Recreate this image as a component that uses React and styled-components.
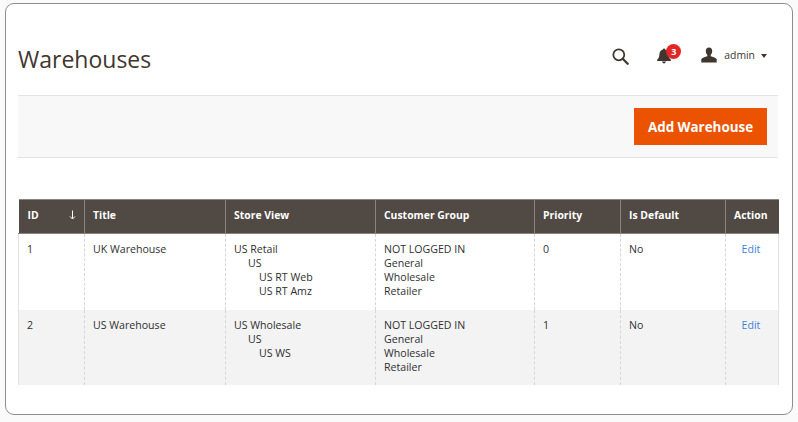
import React from "react";
import styled, { createGlobalStyle } from "styled-components";

const GlobalStyle = createGlobalStyle`
    html, body {
        margin: 0;
        padding: 0;
        background: #fff;
        font-family: "Open Sans", "Noto Sans", sans-serif;
    }
`;

const Page = styled.div`
    width: 798px;
    height: 422px;
    padding: 3px 5px 7px 5px;
    box-sizing: border-box;
    background: #fafafa;
`;

const Frame = styled.div`
    height: 412px;
    box-sizing: border-box;
    padding: 0 14px 0 12px;
    background: #fff;
    border: 1px solid #8e8e8e;
    border-radius: 9px;
`;

const Header = styled.header`
    height: 91px;
    box-sizing: border-box;
    padding-top: 38px;
    display: flex;
    justify-content: space-between;
    align-items: flex-start;
`;

const Title = styled.h1`
    margin: 0;
    font-size: 23px;
    line-height: 34px;
    font-weight: 400;
    color: #41362f;
`;

const Tools = styled.div`
    display: flex;
    align-items: center;
    height: 26px;
    padding-right: 11px;
`;

const SearchIcon = styled.svg`
    margin-top: 2px;
`;

const Bell = styled.div`
    position: relative;
    width: 16px;
    height: 18px;
    margin-top: 2px;
    margin-left: 27px;
    margin-right: 28px;
`;

const Badge = styled.span`
    position: absolute;
    left: 10px;
    top: -3px;
    width: 15px;
    height: 15px;
    border-radius: 50%;
    background: #e22626;
    color: #fff;
    font-size: 9px;
    line-height: 15px;
    font-weight: 700;
    text-align: center;
`;

const UserName = styled.span`
    margin-left: 6px;
    font-size: 10.4px;
    color: #41362f;
`;

const Caret = styled.span`
    width: 0;
    height: 0;
    margin-left: 6px;
    margin-top: 1px;
    border-left: 3.5px solid transparent;
    border-right: 3.5px solid transparent;
    border-top: 4px solid #41362f;
`;

const ActionBar = styled.div`
    height: 63px;
    box-sizing: border-box;
    display: flex;
    justify-content: flex-end;
    align-items: center;
    padding-right: 11px;
    background: #f8f8f8;
    border-top: 1px solid #e3e3e3;
    border-bottom: 1px solid #e3e3e3;
`;

const AddButton = styled.button`
    width: 133px;
    height: 37px;
    padding: 0;
    background: #eb5202;
    border: 1px solid #eb5202;
    color: #fff;
    font-family: inherit;
    font-size: 13.4px;
    font-weight: 700;
`;

const Grid = styled.table`
    width: 760px;
    margin-top: 41px;
    table-layout: fixed;
    border-collapse: collapse;
    font-size: 10.6px;
    line-height: 14px;
    color: #303030;
`;

const HeadCell = styled.th`
    height: 34px;
    box-sizing: border-box;
    padding: 0 8px 4px;
    background: #514943;
    color: #fff;
    font-size: 10.4px;
    font-weight: 700;
    text-align: left;
    border-left: 1px solid #8a837e;
    border-top: 1px solid #8a837e;
    border-bottom: 1px solid #8a837e;
    &:first-child {
        padding-left: 9px;
        border-left: none;
    }
`;

const IdHead = styled.div`
    display: flex;
    justify-content: space-between;
    align-items: center;
`;

const Row = styled.tr`
    background: ${(props) => (props.$alt ? "#f3f3f3" : "#fff")};
`;

const Cell = styled.td`
    height: ${(props) => props.$height}px;
    box-sizing: border-box;
    padding: 8px 8px 0;
    vertical-align: top;
    border-left: 1px dashed #d6d6d6;
    &:first-child {
        border-left: 1px solid #e3e3e3;
    }
    &:last-child {
        padding-right: 10px;
        border-right: 1px solid #e3e3e3;
        text-align: center;
    }
`;

const Line = styled.div`
    padding-left: ${(props) => props.$indent || 0}px;
    white-space: nowrap;
`;

const EditLink = styled.a`
    color: #3d85d8;
    text-decoration: none;
`;

const columns = [66, 141, 150, 159, 86, 105, 53];
const headings = ["ID", "Title", "Store View", "Customer Group", "Priority", "Is Default", "Action"];
const groups = ["NOT LOGGED IN", "General", "Wholesale", "Retailer"];

const rows = [
    {
        id: 1,
        title: "UK Warehouse",
        stores: [["US Retail", 0], ["US", 14], ["US RT Web", 25], ["US RT Amz", 25]],
        priority: 0,
        height: 76,
    },
    {
        id: 2,
        title: "US Warehouse",
        stores: [["US Wholesale", 0], ["US", 14], ["US WS", 25]],
        priority: 1,
        height: 75,
        alt: true,
    },
];

export default function App() {
    return (
        <Page>
            <GlobalStyle />
            <Frame>
                <Header>
                    <Title>Warehouses</Title>
                    <Tools>
                        <SearchIcon width="17" height="17" viewBox="0 0 18 18" fill="none" stroke="#41362f">
                            <circle cx="7.2" cy="7.2" r="5.8" strokeWidth="1.9" />
                            <path d="M11.4 11.4L16.6 16.6" strokeWidth="2.4" strokeLinecap="round" />
                        </SearchIcon>
                        <Bell>
                            <svg width="16" height="18" viewBox="0 0 16 18" fill="#41362f">
                                <circle cx="8" cy="2.6" r="1.1" />
                                <path d="M8 2.6C4.9 2.6 3.6 4.8 3.4 7.4C3.2 9.8 2.6 11.2 1.2 12.6V14H14.8V12.6C13.4 11.2 12.8 9.8 12.6 7.4C12.4 4.8 11.1 2.6 8 2.6Z" />
                                <path d="M6 14.6H10C9.8 15.8 9 16.4 8 16.4C7 16.4 6.2 15.8 6 14.6Z" />
                            </svg>
                            <Badge>3</Badge>
                        </Bell>
                        <svg width="18" height="16" viewBox="0 0 18 17" fill="#41362f">
                            <path d="M9 0.5C6.8 0.5 5.6 2 5.6 4.2C5.6 6 6.3 7.4 7.2 8.3V9.9C5 10.7 1.4 11.4 0.8 13V16.5H17.2V13C16.6 11.4 13 10.7 10.8 9.9V8.3C11.7 7.4 12.4 6 12.4 4.2C12.4 2 11.2 0.5 9 0.5Z" />
                        </svg>
                        <UserName>admin</UserName>
                        <Caret />
                    </Tools>
                </Header>
                <ActionBar>
                    <AddButton>Add Warehouse</AddButton>
                </ActionBar>
                <Grid>
                    <colgroup>
                        {columns.map((width, i) => (
                            <col key={i} width={width} />
                        ))}
                    </colgroup>
                    <thead>
                        <tr>
                            {headings.map((heading, i) => (
                                <HeadCell key={heading}>
                                    {i === 0 ? (
                                        <IdHead>
                                            {heading}
                                            <svg width="7" height="10" viewBox="0 0 7 10" fill="none" stroke="#fff">
                                                <path d="M3.5 0.5V8.5M1 6.5L3.5 9L6 6.5" strokeWidth="1" />
                                            </svg>
                                        </IdHead>
                                    ) : (
                                        heading
                                    )}
                                </HeadCell>
                            ))}
                        </tr>
                    </thead>
                    <tbody>
                        {rows.map((row) => (
                            <Row key={row.id} $alt={row.alt}>
                                <Cell $height={row.height}>{row.id}</Cell>
                                <Cell $height={row.height}>{row.title}</Cell>
                                <Cell $height={row.height}>
                                    {row.stores.map(([name, indent]) => (
                                        <Line key={name} $indent={indent}>
                                            {name}
                                        </Line>
                                    ))}
                                </Cell>
                                <Cell $height={row.height}>
                                    {groups.map((group) => (
                                        <Line key={group}>{group}</Line>
                                    ))}
                                </Cell>
                                <Cell $height={row.height}>{row.priority}</Cell>
                                <Cell $height={row.height}>No</Cell>
                                <Cell $height={row.height}>
                                    <EditLink href="#">Edit</EditLink>
                                </Cell>
                            </Row>
                        ))}
                    </tbody>
                </Grid>
            </Frame>
        </Page>
    );
}
